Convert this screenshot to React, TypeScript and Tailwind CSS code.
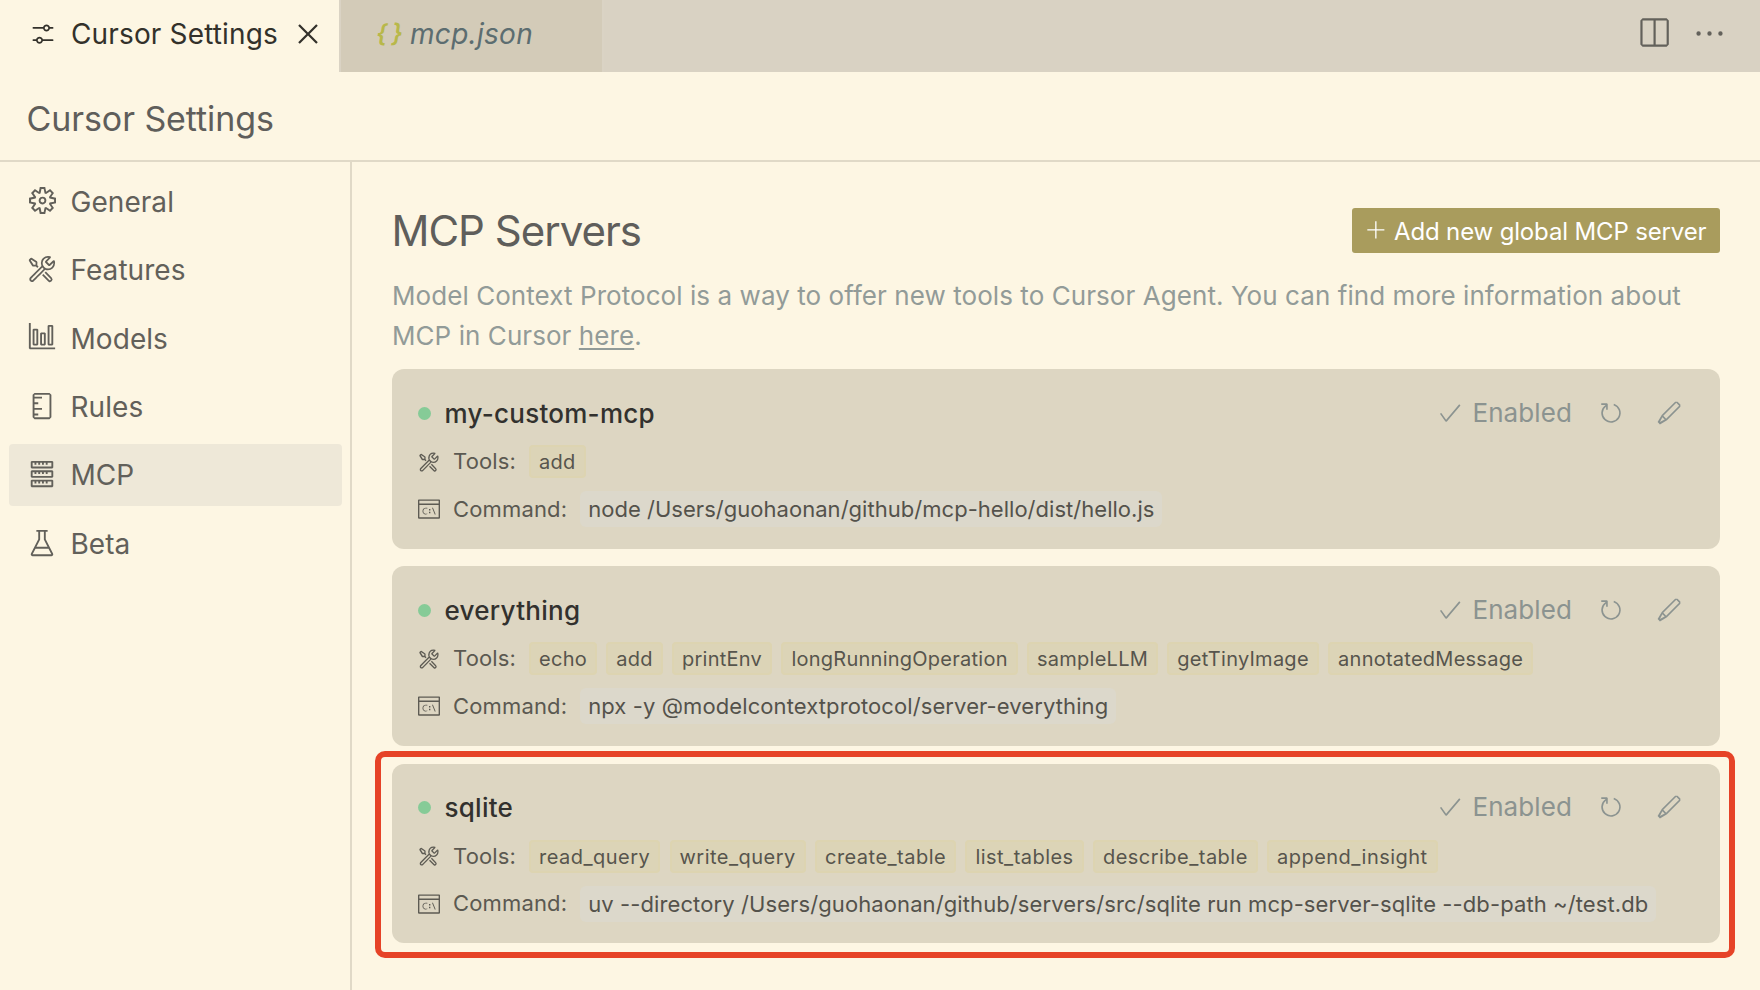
import type { ReactNode } from "react";
import type { IconType } from "react-icons";
import {
  VscAdd,
  VscBeaker,
  VscCheck,
  VscClose,
  VscEdit,
  VscEllipsis,
  VscGraph,
  VscRefresh,
  VscServer,
  VscSettings,
  VscSettingsGear,
  VscSplitHorizontal,
  VscSymbolRuler,
  VscTerminalCmd,
  VscTools,
} from "react-icons/vsc";

type Server = {
  name: string;
  tools: string[];
  command: string;
  toolTracking: string;
  commandTracking: string;
  highlighted?: boolean;
};

const servers: Server[] = [
  {
    name: "my-custom-mcp",
    tools: ["add"],
    command: "node /Users/guohaonan/github/mcp-hello/dist/hello.js",
    toolTracking: "tracking-[0.25px]",
    commandTracking: "tracking-[0.03px]",
  },
  {
    name: "everything",
    tools: [
      "echo",
      "add",
      "printEnv",
      "longRunningOperation",
      "sampleLLM",
      "getTinyImage",
      "annotatedMessage",
    ],
    command: "npx -y @modelcontextprotocol/server-everything",
    toolTracking: "tracking-[0.25px]",
    commandTracking: "tracking-[0.1px]",
  },
  {
    name: "sqlite",
    tools: [
      "read_query",
      "write_query",
      "create_table",
      "list_tables",
      "describe_table",
      "append_insight",
    ],
    command:
      "uv --directory /Users/guohaonan/github/servers/src/sqlite run mcp-server-sqlite --db-path ~/test.db",
    toolTracking: "tracking-[0.47px]",
    commandTracking: "tracking-[0.1px]",
    highlighted: true,
  },
];

const sections: { label: string; Icon: IconType; iconClass: string }[] = [
  { label: "General", Icon: VscSettingsGear, iconClass: "size-[27px]" },
  { label: "Features", Icon: VscTools, iconClass: "size-[30px]" },
  { label: "Models", Icon: VscGraph, iconClass: "size-[30px]" },
  { label: "Rules", Icon: VscSymbolRuler, iconClass: "size-[30px]" },
  { label: "MCP", Icon: VscServer, iconClass: "size-[30px]" },
  { label: "Beta", Icon: VscBeaker, iconClass: "size-[30px]" },
];

function TabBar() {
  return (
    <div className="flex h-[72px] shrink-0 bg-[#d9d2c3]">
      <div className="flex w-[339px] items-center bg-[#fdf6e3] pl-[29px] pb-[5px] text-[#33312b]">
        <VscSettings className="size-[28px] shrink-0" />
        <span className="ml-[14px] text-[28px] leading-none tracking-[0.15px]">Cursor Settings</span>
        <VscClose className="ml-[12px] size-[36px] shrink-0" />
      </div>
      <div className="flex w-[265px] items-center border-x-2 border-[#dad3c4] bg-[#d3cbb8] pl-[35px] pb-[5px] italic">
        <span className="w-[34px] whitespace-nowrap text-[25px] leading-none font-semibold tracking-[4px] text-[#b8b84a]">
          {"{}"}
        </span>
        <span className="text-[28px] leading-none tracking-[0.3px] text-[#5c6d70]">mcp.json</span>
      </div>
      <div className="ml-auto flex items-center gap-[21.5px] pr-[33px] pb-[6px] text-[#63615b]">
        <VscSplitHorizontal className="size-[35px]" />
        <VscEllipsis className="size-[35px]" />
      </div>
    </div>
  );
}

function Sidebar() {
  return (
    <nav className="flex w-[352px] shrink-0 flex-col gap-[6.4px] border-r-2 border-[#e0d9c7] pt-[8.4px] pr-[8px] pl-[9px]">
      {sections.map(({ label, Icon, iconClass }) => (
        <div
          key={label}
          className={
            label === "MCP"
              ? "flex h-[62px] items-center rounded-[4px] bg-[#eee8d8] pl-[18px] text-[#62605a]"
              : "flex h-[62px] items-center rounded-[4px] pl-[18px] text-[#62605a]"
          }
        >
          <span className="flex w-[30px] justify-center pb-px">
            <Icon className={iconClass} />
          </span>
          <span className="ml-[13.5px] pt-[0.8px] text-[28px] leading-none tracking-[0.05px]">{label}</span>
        </div>
      ))}
    </nav>
  );
}

function Row({ Icon, label, children }: { Icon: IconType; label: string; children: ReactNode }) {
  return (
    <div className="flex items-center">
      <Icon className="size-[22px] shrink-0 text-[#5d5b53]" />
      <span className="ml-[13px] shrink-0 pb-px text-[22px] leading-[32px] tracking-[0.15px] text-[#5b5951]">
        {label}
      </span>
      {children}
    </div>
  );
}

function ServerCard({ name, tools, command, toolTracking, commandTracking, highlighted }: Server) {
  return (
    <section className="relative h-[179.6px] rounded-[12px] bg-[#ddd6c2] pt-[28px] pl-[26px]">
      <div className="flex h-[32px] items-center">
        <span className="size-[13px] rounded-full bg-[#86cb97]" />
        <h2 className="ml-[13.5px] pt-px text-[26px] leading-[32px] font-medium tracking-[0.27px] text-[#32312e]">
          {name}
        </h2>
        <div className="ml-auto flex items-center pr-[38.5px] pb-px text-[#8b9390]">
          <VscCheck className="size-[26px]" />
          <span className="ml-[9px] text-[26px] leading-[32px] tracking-[0.1px]">Enabled</span>
          <VscRefresh className="ml-[26px] size-[26px]" />
          <VscEdit className="ml-[31.5px] size-[26px]" />
        </div>
      </div>
      <div className="mt-[16px]">
        <Row Icon={VscTools} label="Tools:">
          <div className="ml-[13px] flex gap-[9.3px]">
            {tools.map((tool) => (
              <span
                key={tool}
                className={`h-[33px] rounded-[4px] border-2 border-[#ddd4b1] bg-[#dcd4b7] px-[8px] text-[20px] leading-[30px] text-[#57554d] ${toolTracking}`}
              >
                {tool}
              </span>
            ))}
          </div>
        </Row>
      </div>
      <div className="mt-[13px]">
        <Row Icon={VscTerminalCmd} label="Command:">
          <code
            className={`ml-[13px] rounded-[6px] bg-[#dcd8cb] px-[8px] font-[Inter,sans-serif] text-[22px] leading-[36px] whitespace-nowrap text-[#54524b] ${commandTracking}`}
          >
            {command}
          </code>
        </Row>
      </div>
      {highlighted && (
        <div className="pointer-events-none absolute -top-[13px] -right-[15px] -bottom-[15px] -left-[17px] rounded-[10px] border-6 border-[#e64327]" />
      )}
    </section>
  );
}

export default function App() {
  return (
    <div className="flex h-[990px] w-[1760px] flex-col overflow-hidden bg-[#fdf6e3] font-[Inter,sans-serif]">
      <TabBar />
      <header className="flex h-[90px] shrink-0 items-center border-b-2 border-[#e0d9c7] pt-[5px] pl-[26.5px]">
        <h1 className="text-[34px] leading-none tracking-[-0.08px] text-[#5f5e5b]">Cursor Settings</h1>
      </header>
      <div className="flex min-h-0 flex-1">
        <Sidebar />
        <main className="flex-1 pt-[46px] pr-[40px] pl-[40px]">
          <div className="flex h-[45px] items-center justify-between">
            <h2 className="-ml-[0.5px] text-[42px] leading-none tracking-[-1px] text-[#5f5e5b]">MCP Servers</h2>
            <button className="flex h-[45px] w-[368px] items-center rounded-[3px] bg-[#a99c5d] pl-[14px] text-white">
              <VscAdd className="size-[21px]" />
              <span className="ml-[7px] pt-[2px] text-[24px] leading-none tracking-[-0.15px] whitespace-nowrap">
                Add new global MCP server
              </span>
            </button>
          </div>
          <p className="mt-[22.5px] text-[26px] leading-[40px] tracking-[0.065px] text-[#929b98]">
            Model Context Protocol is a way to offer new tools to Cursor Agent. You can find more information about
            <br />
            MCP in Cursor <a className="underline decoration-2 underline-offset-[3px]">here</a>.
          </p>
          <div className="mt-[13.5px] flex flex-col gap-[17.8px]">
            {servers.map((server) => (
              <ServerCard key={server.name} {...server} />
            ))}
          </div>
        </main>
      </div>
    </div>
  );
}
